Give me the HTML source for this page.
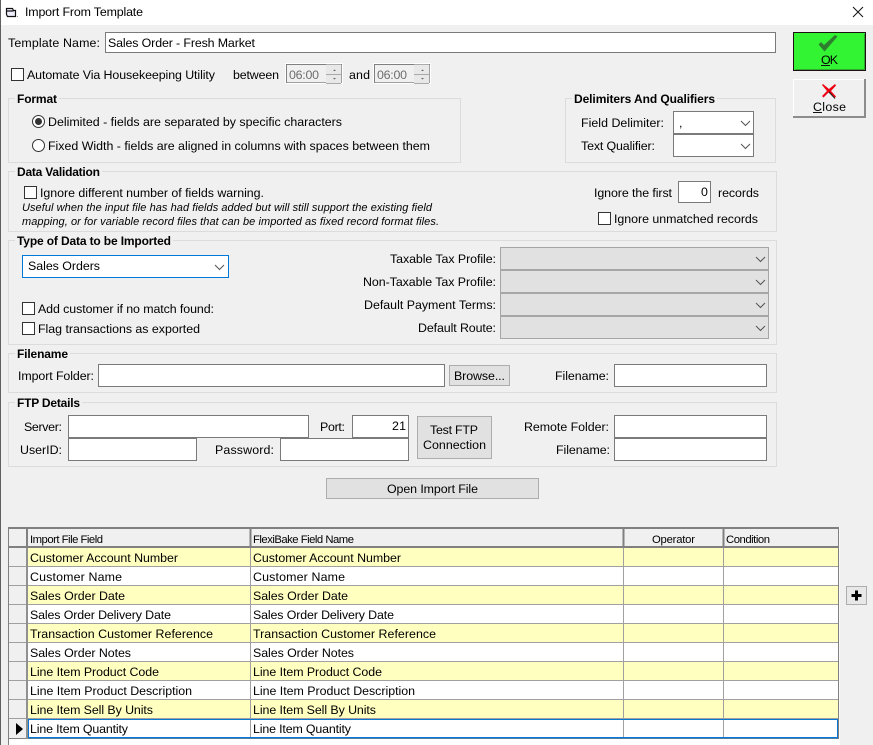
<!DOCTYPE html>
<html><head><meta charset="utf-8"><title>Import From Template</title>
<style>
html,body{margin:0;padding:0;background:#f0f0f0;overflow:hidden}
svg{display:block}
text{font-family:"Liberation Sans",sans-serif;font-size:12.4px;fill:#000;white-space:pre}
.b{font-weight:bold;font-size:12px}
.h{font-size:11.3px}
.i{font-style:italic;font-size:11px}
.g{fill:#6d6d6d}
.ip{fill:#fff;stroke:#7a7a7a}
.gr{fill:none;stroke:#dcdcdc}
.cb{fill:#fff;stroke:#333}
.dis{fill:#e1e1e1;stroke:#a6a6a6}
.btn{fill:#e1e1e1;stroke:#adadad}
.ch{fill:none;stroke:#555;stroke-width:1}
.l{stroke:#a0a0a0;stroke-width:1}
</style></head><body>
<svg width="873" height="745" viewBox="0 0 873 745" xmlns="http://www.w3.org/2000/svg">
<rect width="873" height="745" fill="#f0f0f0"/>
<rect width="873" height="25" fill="#fff"/>
<rect x="0" y="0" width="1" height="745" fill="#5f5f5f"/>
<!-- title -->
<path d="M6.500 8.500h6l1 2h2v6h-8l-1-2z M6.500 11h7" fill="#eef" stroke="#111" stroke-width="1.200"/>
<rect x="17" y="16" width="1" height="1" fill="#888"/>
<text x="25" y="16" textLength="118">Import From Template</text>
<path d="M853 7l10 10M863 7l-10 10" stroke="#111" stroke-width="1" fill="none"/>

<!-- template name -->
<text x="8" y="47" textLength="92">Template Name:</text>
<rect class="ip" x="105.500" y="32.500" width="670" height="20"/>
<text x="108" y="47" textLength="147">Sales Order - Fresh Market</text>

<!-- automate -->
<rect class="cb" x="11.500" y="68.500" width="12" height="12"/>
<text x="27" y="79" textLength="188">Automate Via Housekeeping Utility</text>
<text x="233" y="79" textLength="46">between</text>
<rect x="285.500" y="63.500" width="57" height="20" fill="#fff" stroke="#fff"/>
<rect x="286.500" y="64.500" width="55" height="18" fill="#f0f0f0" stroke="#a0a0a0"/>
<path d="M286.500 83V64.500H342" fill="none" stroke="#808080"/>
<rect x="326" y="65" width="15" height="9" fill="#e8e8e8"/><rect x="326" y="75" width="15" height="8" fill="#e8e8e8"/>
<path d="M333 71h3l-1.500-1.500zM333 78h3l-1.500 1.500z" fill="#666"/>
<path d="M326 64.500h15M326 74.500h15M326 83.500h15" stroke="#aaa"/>
<text class="g" x="289" y="79" textLength="30">06:00</text>
<text x="349" y="79" textLength="21">and</text>
<rect x="373.500" y="63.500" width="57" height="20" fill="#fff" stroke="#fff"/>
<rect x="374.500" y="64.500" width="55" height="18" fill="#f0f0f0" stroke="#a0a0a0"/>
<path d="M374.500 83V64.500H430" fill="none" stroke="#808080"/>
<rect x="414" y="65" width="15" height="9" fill="#e8e8e8"/><rect x="414" y="75" width="15" height="8" fill="#e8e8e8"/>
<path d="M421 71h3l-1.500-1.500zM421 78h3l-1.500 1.500z" fill="#666"/>
<path d="M414 64.500h15M414 74.500h15M414 83.500h15" stroke="#aaa"/>
<text class="g" x="377" y="79" textLength="30">06:00</text>

<!-- format -->
<rect class="gr" x="8.500" y="98.500" width="452" height="64"/>
<rect x="15" y="92" width="44" height="14" fill="#f0f0f0"/>
<text class="b" x="17" y="103" textLength="40">Format</text>
<circle cx="38.500" cy="121.500" r="6" fill="#fff" stroke="#333"/>
<circle cx="38.500" cy="121.500" r="3.500" fill="#333"/>
<text x="48" y="126" textLength="294">Delimited - fields are separated by specific characters</text>
<circle cx="38.500" cy="145.500" r="6" fill="#fff" stroke="#333"/>
<text x="48" y="150" textLength="382">Fixed Width - fields are aligned in columns with spaces between them</text>

<!-- delimiters -->
<rect class="gr" x="565.500" y="98.500" width="210" height="64"/>
<rect x="572" y="92" width="145" height="14" fill="#f0f0f0"/>
<text class="b" x="574" y="103" textLength="141">Delimiters And Qualifiers</text>
<text x="581" y="127" textLength="83">Field Delimiter:</text>
<rect class="ip" x="673.500" y="111.500" width="80" height="22"/>
<text x="679" y="127">,</text>
<path class="ch" d="M741 121l4.500 4.500 4.500-4.500"/>
<text x="581" y="150" textLength="74">Text Qualifier:</text>
<rect class="ip" x="673.500" y="134.500" width="80" height="22"/>
<path class="ch" d="M741 144l4.500 4.500 4.500-4.500"/>

<!-- data validation -->
<rect class="gr" x="8.500" y="171.500" width="768" height="60"/>
<rect x="15" y="165" width="87" height="14" fill="#f0f0f0"/>
<text class="b" x="17" y="176" textLength="83">Data Validation</text>
<rect class="cb" x="24.500" y="186.500" width="12" height="12"/>
<text x="40" y="197" textLength="224">Ignore different number of fields warning.</text>
<text class="i" x="22" y="211" textLength="410">Useful when the input file has had fields added but will still support the existing field</text>
<text class="i" x="22" y="225" textLength="417">mapping, or for variable record files that can be imported as fixed record format files.</text>
<text x="594" y="197" textLength="78">Ignore the first</text>
<rect class="ip" x="678.500" y="181.500" width="32" height="21"/>
<text x="701" y="196">0</text>
<text x="718" y="197" textLength="41">records</text>
<rect class="cb" x="598.500" y="212.500" width="12" height="12"/>
<text x="614" y="223" textLength="144">Ignore unmatched records</text>

<!-- type of data -->
<rect class="gr" x="8.500" y="240.500" width="768" height="104"/>
<rect x="15" y="234" width="158" height="14" fill="#f0f0f0"/>
<text class="b" x="17" y="245" textLength="154">Type of Data to be Imported</text>
<rect x="22.500" y="255.500" width="206" height="22" fill="#fff" stroke="#0078d7"/>
<text x="28" y="270" textLength="72">Sales Orders</text>
<path class="ch" d="M215 265l4.500 4.500 4.500-4.500"/>
<rect class="cb" x="22.500" y="302.500" width="12" height="12"/>
<text x="38" y="313" textLength="176">Add customer if no match found:</text>
<rect class="cb" x="22.500" y="322.500" width="12" height="12"/>
<text x="38" y="333" textLength="162">Flag transactions as exported</text>
<text x="390" y="263" textLength="106">Taxable Tax Profile:</text>
<text x="363" y="286" textLength="133">Non-Taxable Tax Profile:</text>
<text x="364" y="309" textLength="132">Default Payment Terms:</text>
<text x="418" y="332" textLength="78">Default Route:</text>
<rect class="dis" x="500.500" y="247.500" width="268" height="22"/>
<rect class="dis" x="500.500" y="270.500" width="268" height="22"/>
<rect class="dis" x="500.500" y="293.500" width="268" height="22"/>
<rect class="dis" x="500.500" y="316.500" width="268" height="22"/>
<path class="ch" d="M756 257l4.500 4.500 4.500-4.500M756 280l4.500 4.500 4.500-4.500M756 303l4.500 4.500 4.500-4.500M756 326l4.500 4.500 4.500-4.500"/>

<!-- filename -->
<rect class="gr" x="8.500" y="353.500" width="768" height="39"/>
<rect x="15" y="347" width="55" height="14" fill="#f0f0f0"/>
<text class="b" x="17" y="358" textLength="51">Filename</text>
<text x="18" y="380" textLength="76">Import Folder:</text>
<rect class="ip" x="98.500" y="364.500" width="346" height="22"/>
<rect class="btn" x="449.500" y="365.500" width="60" height="20"/>
<text x="454" y="380" textLength="51">Browse...</text>
<text x="555" y="380" textLength="54">Filename:</text>
<rect class="ip" x="614.500" y="364.500" width="152" height="22"/>

<!-- ftp -->
<rect class="gr" x="8.500" y="402.500" width="768" height="64"/>
<rect x="15" y="396" width="67" height="14" fill="#f0f0f0"/>
<text class="b" x="17" y="407" textLength="63">FTP Details</text>
<text x="24" y="431" textLength="38">Server:</text>
<rect class="ip" x="68.500" y="415.500" width="240" height="22"/>
<text x="320" y="431" textLength="25">Port:</text>
<rect class="ip" x="352.500" y="415.500" width="56" height="22"/>
<text x="392" y="430" textLength="14">21</text>
<text x="20" y="454" textLength="42">UserID:</text>
<rect class="ip" x="68.500" y="438.500" width="128" height="22"/>
<text x="215" y="454" textLength="59">Password:</text>
<rect class="ip" x="280.500" y="438.500" width="128" height="22"/>
<rect class="btn" x="417.500" y="416.500" width="74" height="42"/>
<text x="430" y="434" textLength="48">Test FTP</text>
<text x="423" y="449" textLength="63">Connection</text>
<text x="524" y="431" textLength="85">Remote Folder:</text>
<rect class="ip" x="614.500" y="415.500" width="152" height="22"/>
<text x="556" y="454" textLength="54">Filename:</text>
<rect class="ip" x="614.500" y="438.500" width="152" height="22"/>

<rect class="btn" x="326.500" y="478.500" width="212" height="20"/>
<text x="387" y="493" textLength="91">Open Import File</text>

<!-- OK / Close -->
<rect x="793.500" y="32.500" width="72" height="38" fill="#33f433" stroke="#1c1010"/>
<path d="M795 69.500h70M864.500 34v36" stroke="#2fa82f"/>
<path d="M821 42l3 3 11-10 2.500 1.500-13 15-6-7z" fill="#2f7d2f"/>
<text x="821" y="64" textLength="17">OK</text>
<rect x="821" y="65" width="9" height="1" fill="#111"/>
<rect x="793" y="79" width="73" height="39" fill="#f0f0f0"/>
<path d="M793.500 118V79.500H866" stroke="#fff" fill="none"/>
<path d="M793 117h72v-38" stroke="#8c8c8c" fill="none" stroke-width="2"/>
<path d="M823 84l6 5 6-5 1 1.500-5 5.500 5 5.500-1.500 1.500-6-5.500-5 5-1.500-1.500 5-5-5-6z" fill="#ee0010"/>
<path d="M829 92l6 6.500" stroke="#222" stroke-width="1"/>
<text x="813" y="111" textLength="33">Close</text>
<rect x="813" y="112" width="9" height="1" fill="#111"/>

<!-- grid -->
<rect x="8" y="527" width="832" height="218" fill="#f0f0f0"/>
<rect x="839" y="527" width="1" height="218" fill="#fafafa"/>
<rect x="9" y="739" width="830" height="6" fill="#fff"/>
<rect x="8" y="527" width="1" height="218" fill="#808080"/>
<rect x="8" y="527" width="831" height="2" fill="#808080"/>
<rect x="838" y="527" width="1" height="212" fill="#808080"/>
<rect x="9" y="738" width="829" height="1" fill="#808080"/>
<!-- rows -->
<rect x="27" y="548" width="811" height="19" fill="#ffffc0"/>
<rect x="27" y="567" width="811" height="19" fill="#fff"/>
<rect x="27" y="586" width="811" height="19" fill="#ffffc0"/>
<rect x="27" y="605" width="811" height="19" fill="#fff"/>
<rect x="27" y="624" width="811" height="19" fill="#ffffc0"/>
<rect x="27" y="643" width="811" height="19" fill="#fff"/>
<rect x="27" y="662" width="811" height="19" fill="#ffffc0"/>
<rect x="27" y="681" width="811" height="19" fill="#fff"/>
<rect x="27" y="700" width="811" height="19" fill="#ffffc0"/>
<rect x="27" y="719" width="811" height="19" fill="#fff"/>
<path class="l" d="M9 566.500h829M9 585.500h829M9 604.500h829M9 623.500h829M9 642.500h829M9 661.500h829M9 680.500h829M9 699.500h829M9 718.500h829"/>
<path class="l" d="M250.500 548v191M623.500 548v191M723.500 548v191"/>
<path d="M27 548v191" stroke="#909090" stroke-width="2"/>
<!-- header separators -->
<path d="M9 547h830" stroke="#808080" stroke-width="2"/>
<path d="M27 528v20M250.500 528v20M623.500 528v20M723.500 528v20" stroke="#808080" stroke-width="2"/>
<!-- selected row -->
<rect x="28" y="719" width="810" height="1" fill="#0a78d2"/>
<rect x="28" y="737" width="810" height="1" fill="#0a78d2"/>
<rect x="28" y="738" width="810" height="1" fill="#4d7ea8"/>
<rect x="28" y="719" width="1" height="19" fill="#0a78d2"/>
<rect x="837" y="719" width="1" height="19" fill="#0a78d2"/>
<path d="M16 723v12l7-6z" fill="#000"/>

<text class="h" x="30" y="543" textLength="73">Import File Field</text>
<text class="h" x="253" y="543" textLength="101">FlexiBake Field Name</text>
<text class="h" x="652" y="543" textLength="43">Operator</text>
<text class="h" x="726" y="543" textLength="44">Condition</text>

<text x="30" y="562" textLength="148">Customer Account Number</text><text x="253" y="562" textLength="148">Customer Account Number</text>
<text x="30" y="581" textLength="92">Customer Name</text><text x="253" y="581" textLength="92">Customer Name</text>
<text x="30" y="600" textLength="95">Sales Order Date</text><text x="253" y="600" textLength="95">Sales Order Date</text>
<text x="30" y="619" textLength="141">Sales Order Delivery Date</text><text x="253" y="619" textLength="141">Sales Order Delivery Date</text>
<text x="30" y="638" textLength="183">Transaction Customer Reference</text><text x="253" y="638" textLength="183">Transaction Customer Reference</text>
<text x="30" y="657" textLength="101">Sales Order Notes</text><text x="253" y="657" textLength="101">Sales Order Notes</text>
<text x="30" y="676" textLength="129">Line Item Product Code</text><text x="253" y="676" textLength="129">Line Item Product Code</text>
<text x="30" y="695" textLength="162">Line Item Product Description</text><text x="253" y="695" textLength="162">Line Item Product Description</text>
<text x="30" y="714" textLength="123">Line Item Sell By Units</text><text x="253" y="714" textLength="123">Line Item Sell By Units</text>
<text x="30" y="733" textLength="98">Line Item Quantity</text><text x="253" y="733" textLength="98">Line Item Quantity</text>

<!-- plus -->
<rect x="846.500" y="586.500" width="20" height="18" fill="#e8e8e8" stroke="#adadad"/>
<path d="M851.500 595.500h10M856.500 590.500v10" stroke="#000" stroke-width="3"/>
</svg>
</body></html>
